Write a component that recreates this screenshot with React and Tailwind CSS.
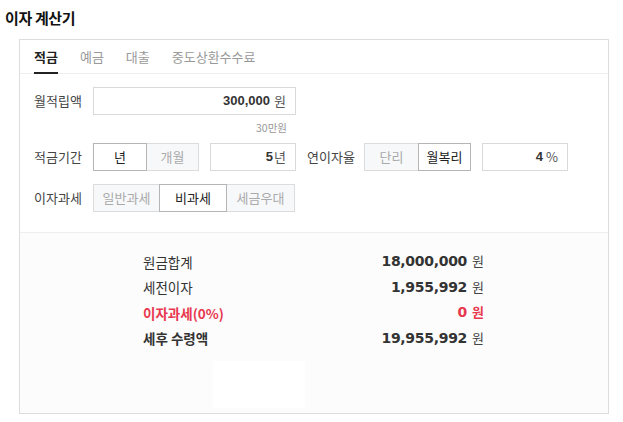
import React from "react";

const kr = { fontFamily: '"Noto Sans CJK KR", "Noto Sans", sans-serif' };
const num = { fontFamily: '"Liberation Sans", Arial, sans-serif' };
const big = { fontFamily: '"DejaVu Sans", Verdana, sans-serif' };

function Seg({ items, selected, widths }) {
  return (
    <div className="flex h-[28px]">
      {items.map((t, i) => {
        const on = i === selected;
        return (
          <button
            key={t}
            style={{ width: widths[i] }}
            className={
              "h-full text-[13px] border -ml-px first:ml-0 relative " +
              (on
                ? "bg-white border-[#b5b5b5] text-[#222] z-10"
                : "bg-[#f7f8fa] border-[#dcdcdc] text-[#aaa]")
            }
          >
            {t}
          </button>
        );
      })}
    </div>
  );
}

function Field({ w, value, unit, gap }) {
  return (
    <div
      className="h-[28px] border border-[#d9d9d9] bg-white flex items-center justify-end pr-[9px]"
      style={{ width: w }}
    >
      <span style={num} className="text-[13px] font-bold text-[#333]">{value}</span>
      <span className="text-[13px] text-[#555]" style={{ marginLeft: gap }}>{unit}</span>
    </div>
  );
}

const results = [
  { label: "원금합계", value: "18,000,000", unit: "원" },
  { label: "세전이자", value: "1,955,992", unit: "원" },
  { label: "이자과세(0%)", value: "0", unit: "원", red: true },
  { label: "세후 수령액", value: "19,955,992", unit: "원", bold: true },
];

export default function App() {
  return (
    <div style={kr} className="w-[623px] h-[422px] bg-white text-[#333] overflow-hidden">
      <h1 className="pl-[5px] pt-[7px] h-[39px] text-[15px] font-bold text-[#111] tracking-tight">
        이자 계산기
      </h1>

      <div className="ml-[19px] w-[590px] h-[375px] border border-[#dddddd] flex flex-col">
        {/* tabs */}
        <div className="h-[34px] border-b border-[#eeeeee] flex items-stretch pl-[14px] gap-[22px] text-[13px]">
          <div className="relative flex items-center font-bold text-[#222]">
            적금
            <span className="absolute left-0 right-0 bottom-[-1px] h-[2px] bg-[#222]" />
          </div>
          <div className="flex items-center text-[#999]">예금</div>
          <div className="flex items-center text-[#999]">대출</div>
          <div className="flex items-center text-[#999]">중도상환수수료</div>
        </div>

        {/* form */}
        <div className="pl-[14px] pt-[13px] pb-[20px] border-b border-[#eeeeee] text-[13px]">
          <div className="flex items-center">
            <div className="w-[59px] text-[#444]">월적립액</div>
            <Field w={203} value="300,000" unit="원" gap={4} />
          </div>
          <div className="w-[262px] h-[28px] flex items-center justify-end pr-[9px] pb-[2px] text-[10.5px] text-[#999]">
            30만원
          </div>
          <div className="flex items-center">
            <div className="w-[59px] text-[#444]">적금기간</div>
            <Seg items={["년", "개월"]} selected={0} widths={[54, 53]} />
            <div className="ml-[11px]">
              <Field w={86} value="5" unit="년" gap={1} />
            </div>
            <div className="ml-[11px] w-[57px] text-[#444]">연이자율</div>
            <Seg items={["단리", "월복리"]} selected={1} widths={[55, 53]} />
            <div className="ml-[11px]">
              <Field w={86} value="4" unit="%" gap={3} />
            </div>
          </div>
          <div className="flex items-center mt-[13px]">
            <div className="w-[59px] text-[#444]">이자과세</div>
            <Seg items={["일반과세", "비과세", "세금우대"]} selected={1} widths={[67, 68, 69]} />
          </div>
        </div>

        {/* results */}
        <div className="flex-1 bg-[#fcfcfc] pt-[16px]">
          <div className="ml-[123px] w-[341px]">
            {results.map((r) => (
              <div key={r.label} className="h-[25.5px] flex items-center justify-between">
                <span
                  className={
                    "text-[13.5px] " +
                    (r.red ? "font-bold text-[#e8384f]" : r.bold ? "font-bold text-[#333]" : "text-[#333]")
                  }
                >
                  {r.label}
                </span>
                <span className="flex items-baseline">
                  <span
                    style={big}
                    className={"text-[14px] font-bold tracking-[-0.3px] " + (r.red ? "text-[#e8384f]" : "text-[#333]")}
                  >
                    {r.value}
                  </span>
                  <span className={"ml-[5px] text-[13px] " + (r.red ? "font-bold text-[#e8384f]" : "text-[#444]")}>
                    {r.unit}
                  </span>
                </span>
              </div>
            ))}
          </div>
          <div className="ml-[193px] mt-[10px] w-[92px] h-[47px] bg-white" />
        </div>
      </div>
    </div>
  );
}
